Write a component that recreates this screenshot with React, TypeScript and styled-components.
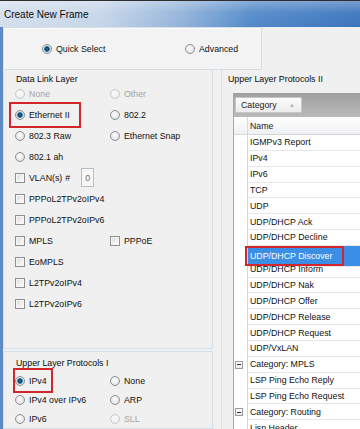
import React from 'react'
import styled, { createGlobalStyle } from 'styled-components'

const GlobalStyle = createGlobalStyle`
  html, body {
    margin: 0;
    padding: 0;
    background: #f0f0f0;
  }
  body {
    width: 360px;
    height: 429px;
    overflow: hidden;
  }
`

const Window = styled.div`
  width: 360px;
  height: 429px;
  overflow: hidden;
  display: flex;
  flex-direction: column;
  font-family: 'Liberation Sans', Arial, sans-serif;
  font-size: 8.8px;
  color: #111;
`

const TitleBar = styled.div`
  height: 27px;
  flex: none;
  box-sizing: border-box;
  border-top: 1px solid #2e2e2e;
  display: flex;
  align-items: center;
  padding-left: 4px;
  font-size: 10px;
  color: #0c0c0c;
  background: linear-gradient(
      to bottom,
      rgba(255, 255, 255, 0.3) 0%,
      rgba(255, 255, 255, 0.06) 45%,
      rgba(0, 0, 0, 0) 100%
    ),
    linear-gradient(
      to right,
      #d4dfec 0%,
      #c6d6e9 28%,
      #94b4da 50%,
      #5289c9 70%,
      #3c75bd 100%
    );
`

const Body = styled.div`
  flex: 1;
  min-height: 0;
  display: flex;
  flex-direction: column;
  background: #f0f0f0;
  border-left: 3px solid #5f8ac4;
`

const ModeBox = styled.div`
  width: 259px;
  height: 43px;
  flex: none;
  box-sizing: border-box;
  border: 1px solid #d5dfe5;
  box-shadow: inset 1px 1px 0 #fbfbfb;
  background: #f3f3f3;
  display: grid;
  grid-template-columns: 143px auto;
  align-items: center;
  padding-left: 38px;
`

const Columns = styled.div`
  flex: 1;
  min-height: 0;
  display: flex;
`

const LeftPane = styled.div`
  width: 210px;
  flex: none;
  display: flex;
  flex-direction: column;
`

const Panel = styled.div<{ $height?: number; $top?: number }>`
  box-sizing: border-box;
  ${({ $height }) => ($height ? `height: ${$height}px;` : 'flex: 1;')}
  margin-top: ${({ $top }) => $top ?? 0}px;
  border: 1px solid #d5dfe5;
  ${({ $top }) => ($top ? '' : 'border-top: none;')}
  padding: ${({ $top }) => ($top ? 6 : 4)}px 0 0 11px;
`

const GroupLabel = styled.div`
  line-height: 10px;
  margin-left: 1px;
  margin-bottom: -1px;
  color: #0a0a0a;
`

const OptionGrid = styled.div<{ $row: number }>`
  display: grid;
  grid-template-columns: 95px 1fr;
  grid-auto-rows: ${({ $row }) => $row}px;
  align-items: center;
  justify-items: start;
`

const WideCell = styled.div`
  grid-column: 1 / span 2;
  display: flex;
  align-items: center;
`

const OptionLabel = styled.span<{ $disabled?: boolean }>`
  display: inline-flex;
  align-items: center;
  gap: 4px;
  line-height: 10px;
  white-space: nowrap;
  color: ${({ $disabled }) => ($disabled ? '#a4a4a4' : '#111')};
`

const Radio = styled.span<{ $checked?: boolean; $disabled?: boolean }>`
  width: 10px;
  height: 10px;
  flex: none;
  box-sizing: border-box;
  border-radius: 50%;
  border: 1px solid ${({ $disabled }) => ($disabled ? '#c9c9c9' : '#8d8f91')};
  background: ${({ $checked, $disabled }) =>
    $checked
      ? 'radial-gradient(circle at 50% 50%, #2f7aa3 0, #16405f 1.6px, #3d86b4 2.6px, #cfe0ea 3.2px, #f2f2f2 4.5px)'
      : $disabled
      ? 'radial-gradient(circle at 45% 40%, #fbfbfb 0, #ececec 80%)'
      : 'radial-gradient(circle at 45% 40%, #ffffff 0, #dedede 80%)'};
`

const Check = styled.span`
  width: 10px;
  height: 10px;
  flex: none;
  box-sizing: border-box;
  border: 1px solid #8f8f8f;
  background: linear-gradient(135deg, #d9d9d9 0%, #f1f1f1 60%, #fcfcfc 100%);
  box-shadow: inset 0 0 0 1px #f6f6f6;
`

const Mark = styled.span<{ $w: number; $h: number; $ml: number; $pl: number }>`
  position: relative;
  z-index: 1;
  display: inline-flex;
  align-items: center;
  box-sizing: border-box;
  width: ${({ $w }) => $w}px;
  height: ${({ $h }) => $h}px;
  margin-left: ${({ $ml }) => $ml}px;
  padding-left: ${({ $pl }) => $pl}px;
  border: 2px solid #d3262b;
  white-space: nowrap;
`

const Hash = styled.span`
  margin-left: 3px;
`

const NumberBox = styled.span`
  width: 13px;
  height: 19px;
  box-sizing: border-box;
  margin-left: 11px;
  border: 1px solid #b6bcc3;
  background: #f7f7f7;
  color: #6c6c6c;
  display: flex;
  align-items: center;
  justify-content: center;
`

const RightPane = styled.div`
  flex: 1;
  min-width: 0;
  margin-left: 8px;
  border-left: 1px solid #d5dfe5;
  padding-top: 4px;
  overflow: hidden;
`

const PaneLabel = styled.div`
  line-height: 10px;
  padding-left: 6px;
  color: #0a0a0a;
`

const Table = styled.div`
  width: 160px;
  margin: 9px 0 0 11px;
  border-left: 1px solid #a7a7a7;
  background: #ffffff;
`

const GroupBar = styled.div`
  height: 24px;
  box-sizing: border-box;
  padding: 4px 0 0 1px;
  background: linear-gradient(to bottom, #9f9f9f, #bababa);
`

const CategoryButton = styled.div`
  width: 67px;
  height: 16px;
  box-sizing: border-box;
  border: 1px solid #c6c6c6;
  background: linear-gradient(to bottom, #fcfcfc, #ececec);
  display: flex;
  align-items: center;
  padding-left: 5px;
  color: #222;

  & .arrow {
    margin-left: auto;
    margin-right: 6px;
    font-size: 6px;
    color: #b2b2b2;
  }
`

const HeaderRow = styled.div`
  height: 18px;
  box-sizing: border-box;
  display: grid;
  grid-template-columns: 14px 1fr;
  background: linear-gradient(to bottom, #ffffff, #eff0f2);
  border-bottom: 1px solid #d5d5d5;

  & > span:first-child {
    border-right: 1px solid #dadada;
  }
  & > span:last-child {
    display: flex;
    align-items: center;
    padding-left: 2px;
    color: #222;
  }
`

const Row = styled.div`
  height: 15.85px;
  display: grid;
  grid-template-columns: 14px 1fr;
`

const Indent = styled.span`
  box-sizing: border-box;
  border-right: 1px solid #d6d6d6;
  display: flex;
  align-items: center;
  padding-left: 1px;
`

const Cell = styled.span<{ $selected?: boolean }>`
  box-sizing: border-box;
  display: flex;
  align-items: center;
  padding-left: ${({ $selected }) => ($selected ? 0 : 2)}px;
  border-bottom: 1px solid #e8e8e8;
  white-space: nowrap;
  background: ${({ $selected }) => ($selected ? '#3a8ee6' : 'transparent')};
  color: ${({ $selected }) => ($selected ? '#ffffff' : '#111')};
`

const MinusBox = styled.span`
  width: 8px;
  height: 8px;
  box-sizing: border-box;
  border: 1px solid #9c9c9c;
  background: linear-gradient(to bottom, #ffffff, #e9e9e9);
  display: flex;
  align-items: center;
  justify-content: center;

  &::after {
    content: '';
    width: 4px;
    height: 1px;
    background: #333;
  }
`

type Opt = {
  kind: 'radio' | 'check'
  label: string
  checked?: boolean
  disabled?: boolean
}

const Option: React.FC<Opt> = ({ kind, label, checked, disabled }) => (
  <OptionLabel $disabled={disabled}>
    {kind === 'radio' ? (
      <Radio $checked={checked} $disabled={disabled} />
    ) : (
      <Check />
    )}
    <span>{label}</span>
  </OptionLabel>
)

const dataLinkRows: (Opt | null)[][] = [
  [
    { kind: 'radio', label: 'None', disabled: true },
    { kind: 'radio', label: 'Other', disabled: true }
  ],
  [
    { kind: 'radio', label: 'Ethernet II', checked: true },
    { kind: 'radio', label: '802.2' }
  ],
  [
    { kind: 'radio', label: '802.3 Raw' },
    { kind: 'radio', label: 'Ethernet Snap' }
  ],
  [{ kind: 'radio', label: '802.1 ah' }, null],
  [],
  [{ kind: 'check', label: 'PPPoL2TPv2oIPv4' }, null],
  [{ kind: 'check', label: 'PPPoL2TPv2oIPv6' }, null],
  [
    { kind: 'check', label: 'MPLS' },
    { kind: 'check', label: 'PPPoE' }
  ],
  [{ kind: 'check', label: 'EoMPLS' }, null],
  [{ kind: 'check', label: 'L2TPv2oIPv4' }, null],
  [{ kind: 'check', label: 'L2TPv2oIPv6' }, null]
]

const upperRows: Opt[][] = [
  [
    { kind: 'radio', label: 'IPv4', checked: true },
    { kind: 'radio', label: 'None' }
  ],
  [
    { kind: 'radio', label: 'IPv4 over IPv6' },
    { kind: 'radio', label: 'ARP' }
  ],
  [
    { kind: 'radio', label: 'IPv6' },
    { kind: 'radio', label: 'SLL', disabled: true }
  ]
]

type Proto = { name: string; category?: boolean; selected?: boolean }

const protocols: Proto[] = [
  { name: 'IGMPv3 Report' },
  { name: 'IPv4' },
  { name: 'IPv6' },
  { name: 'TCP' },
  { name: 'UDP' },
  { name: 'UDP/DHCP Ack' },
  { name: 'UDP/DHCP Decline' },
  { name: 'UDP/DHCP Discover', selected: true },
  { name: 'UDP/DHCP Inform' },
  { name: 'UDP/DHCP Nak' },
  { name: 'UDP/DHCP Offer' },
  { name: 'UDP/DHCP Release' },
  { name: 'UDP/DHCP Request' },
  { name: 'UDP/VxLAN' },
  { name: 'Category: MPLS', category: true },
  { name: 'LSP Ping Echo Reply' },
  { name: 'LSP Ping Echo Request' },
  { name: 'Category: Routing', category: true },
  { name: 'Lisp Header' }
]

export default function App() {
  return (
    <Window>
      <GlobalStyle />
      <TitleBar>Create New Frame</TitleBar>
      <Body>
        <ModeBox>
          <Option kind="radio" label="Quick Select" checked />
          <Option kind="radio" label="Advanced" />
        </ModeBox>
        <Columns>
          <LeftPane>
            <Panel $height={290}>
              <GroupLabel>Data Link Layer</GroupLabel>
              <OptionGrid $row={21}>
                {dataLinkRows.map((pair, i) =>
                  pair.length === 0 ? (
                    <WideCell key={i}>
                      <Option kind="check" label="VLAN(s)" />
                      <Hash>#</Hash>
                      <NumberBox>0</NumberBox>
                    </WideCell>
                  ) : (
                    pair.map((opt, j) =>
                      opt === null ? (
                        <span key={`${i}-${j}`} />
                      ) : opt.checked ? (
                        <Mark key={`${i}-${j}`} $w={72} $h={26} $ml={-6} $pl={4}>
                          <Option {...opt} />
                        </Mark>
                      ) : (
                        <Option key={`${i}-${j}`} {...opt} />
                      )
                    )
                  )
                )}
              </OptionGrid>
            </Panel>
            <Panel $top={2}>
              <GroupLabel>Upper Layer Protocols I</GroupLabel>
              <OptionGrid $row={19} style={{ marginTop: 4 }}>
                {upperRows.map((pair, i) =>
                  pair.map((opt, j) =>
                    opt.checked ? (
                      <Mark key={`${i}-${j}`} $w={40} $h={25} $ml={-2} $pl={0}>
                        <Option {...opt} />
                      </Mark>
                    ) : (
                      <Option key={`${i}-${j}`} {...opt} />
                    )
                  )
                )}
              </OptionGrid>
            </Panel>
          </LeftPane>
          <RightPane>
            <PaneLabel>Upper Layer Protocols II</PaneLabel>
            <Table>
              <GroupBar>
                <CategoryButton>
                  Category<span className="arrow">▲</span>
                </CategoryButton>
              </GroupBar>
              <HeaderRow>
                <span />
                <span>Name</span>
              </HeaderRow>
              {protocols.map((p) => (
                <Row key={p.name}>
                  <Indent>{p.category && <MinusBox />}</Indent>
                  <Cell $selected={p.selected}>
                    {p.selected ? (
                      <Mark $w={99} $h={20} $ml={-3} $pl={3}>
                        {p.name}
                      </Mark>
                    ) : (
                      p.name
                    )}
                  </Cell>
                </Row>
              ))}
            </Table>
          </RightPane>
        </Columns>
      </Body>
    </Window>
  )
}
